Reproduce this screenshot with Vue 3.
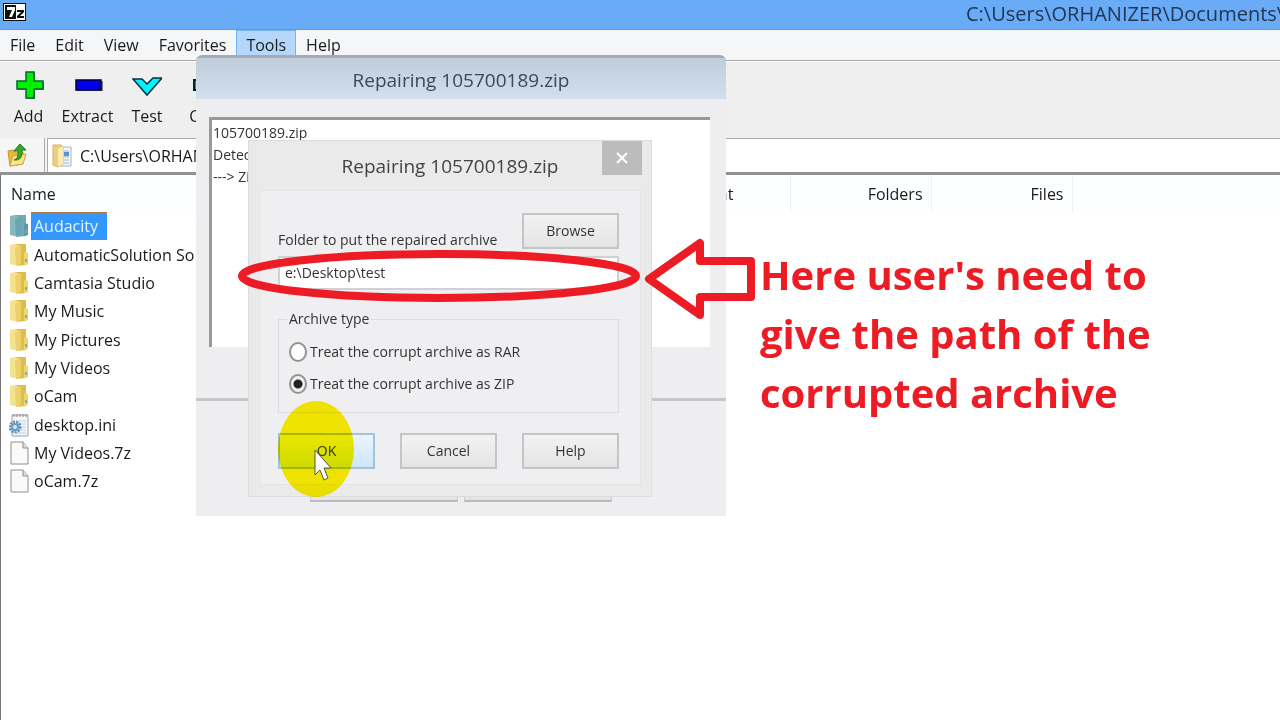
<script setup>
import { ref } from 'vue'

const menus = ['File', 'Edit', 'View', 'Favorites', 'Tools', 'Help']
const files = [
  { name: 'Audacity', kind: 'folder', selected: true },
  { name: 'AutomaticSolution So', kind: 'folder' },
  { name: 'Camtasia Studio', kind: 'folder' },
  { name: 'My Music', kind: 'folder' },
  { name: 'My Pictures', kind: 'folder' },
  { name: 'My Videos', kind: 'folder' },
  { name: 'oCam', kind: 'folder' },
  { name: 'desktop.ini', kind: 'ini' },
  { name: 'My Videos.7z', kind: 'file' },
  { name: 'oCam.7z', kind: 'file' }
]
const path = ref('C:\\Users\\ORHANIZER\\Documents\\')
const target = ref('e:\\Desktop\\test')
const archiveType = ref('zip')
</script>

<template>
  <div class="window">
    <header class="titlebar">
      <svg class="logo" viewBox="0 0 23 18" aria-hidden="true">
        <rect x="0" y="0" width="23" height="18" fill="#111" />
        <rect x="1" y="1" width="21" height="16" fill="#fff" />
        <rect x="2" y="2" width="11" height="14" fill="#111" />
        <path d="M4 4H12V7L9 14H6L9 7H4Z" fill="#fff" />
        <path d="M14 7H21V9L17 13H21V15H14V13L18 9H14Z" fill="#111" />
      </svg>
      <h1>C:\Users\ORHANIZER\Documents\</h1>
    </header>

    <nav class="menubar">
      <button v-for="m in menus" :key="m" type="button" :class="{ open: m === 'Tools' }">{{ m }}</button>
    </nav>

    <div class="toolbar">
      <button type="button" class="tool add">
        <svg viewBox="0 0 30 30" aria-hidden="true">
          <path d="M13 3H21V12H30V20H21V29H13V20H4V12H13Z" fill="#777" />
          <path d="M12 2H20V11H29V19H20V28H12V19H3V11H12Z" fill="#00f000" stroke="#063" stroke-width="1.500" />
        </svg>
        Add
      </button>
      <button type="button" class="tool extract">
        <svg viewBox="0 0 30 30" aria-hidden="true">
          <rect x="4" y="11" width="26" height="10" fill="#777" />
          <rect x="3" y="10" width="25" height="10" fill="#0000f0" stroke="#003" stroke-width="1.500" />
        </svg>
        Extract
      </button>
      <button type="button" class="tool test">
        <svg viewBox="0 0 30 30" aria-hidden="true">
          <path d="M1 9H10L15 14L21 8H30L15 25Z" fill="#00f4ff" stroke="#034" stroke-width="1.500" />
        </svg>
        Test
      </button>
      <button type="button" class="tool copy">
        <svg viewBox="0 0 30 30" aria-hidden="true">
          <path d="M1 10H17V5L28 15L17 25V20H1Z" fill="#00a890" stroke="#022" stroke-width="2" />
        </svg>
        Copy
      </button>
    </div>

    <div class="addressbar">
      <button type="button" class="up" aria-label="Up one level">
        <svg viewBox="0 0 20 24" aria-hidden="true">
          <path d="M1 8L7 7L9 10L16 9V21L3 23Z" fill="#e9b93a" stroke="#c6962a" />
          <path d="M3 23L6 13L19 11L16 21Z" fill="#fbe58c" stroke="#d3a63c" />
          <path d="M7 17Q12 16 11 8H7L13 1L19 7H15Q16 18 7 17Z" fill="#38a92c" stroke="#1e7d1b" />
        </svg>
      </button>
      <label class="address">
        <svg viewBox="0 0 20 24" aria-hidden="true">
          <path d="M7 3H19V22H8Z" fill="#f4f7fa" stroke="#a9b2b9" />
          <path d="M12 7H17M12 13H17M12 16H17M12 19H17" stroke="#9fb4c6" />
          <path d="M12 8H17V12H12Z" fill="#5793cf" />
          <path d="M1 1H9L11 3V20L6 23L1 21Z" fill="#ecd07e" stroke="#d6b35e" />
          <path d="M6 5L11 2V20L6 23Z" fill="#faebb8" />
        </svg>
        <input v-model="path" type="text" aria-label="Path" />
      </label>
    </div>

    <main class="list">
      <table>
        <colgroup>
          <col class="c-name" /><col class="c-mid" /><col class="c-mid" /><col class="c-mid" /><col />
        </colgroup>
        <thead>
          <tr>
            <th class="left">Name</th>
            <th class="left">Comment</th>
            <th>Folders</th>
            <th>Files</th>
            <th></th>
          </tr>
        </thead>
        <tbody>
          <tr v-for="f in files" :key="f.name" :class="{ selected: f.selected }">
            <td colspan="5">
              <div class="entry">
                <svg v-if="f.kind === 'folder'" viewBox="0 0 20 24" aria-hidden="true">
                  <path d="M6 1L17 1V22L7 23Z" :fill="f.selected ? '#6faab5' : '#dfbd4c'" />
                  <path d="M15 9L19 10V21L15 22Z" :fill="f.selected ? '#5a9cae' : '#eed66c'" />
                  <path d="M1 2L6 1L10 3V23L1 21Z" :fill="f.selected ? '#86b7bd' : '#f5e290'" />
                  <path d="M6 5L12 2V20L7 23Z" :fill="f.selected ? '#6ba6b0' : '#ecd06a'" />
                  <path d="M16 16H18V19H16Z" fill="#7db58b" />
                </svg>
                <svg v-else-if="f.kind === 'ini'" viewBox="0 0 20 24" aria-hidden="true">
                  <path d="M3 2H19V23H3Z" fill="#f5f7f8" stroke="#9aa0a4" />
                  <path d="M5 1V4M8 1V4M11 1V4M14 1V4M17 1V4" stroke="#888" />
                  <path d="M7 8H17M7 11H17M7 14H17M7 17H17M7 20H17" stroke="#c3cdd4" />
                  <circle cx="6" cy="14" r="5" fill="none" stroke="#5d90b8" stroke-width="3" stroke-dasharray="2 1" />
                  <circle cx="6" cy="14" r="3" fill="#dfeaf2" stroke="#6c9dc2" stroke-width="2" />
                </svg>
                <svg v-else viewBox="0 0 20 24" aria-hidden="true">
                  <path d="M2 1H14L19 7V23H2Z" fill="#fafafa" stroke="#8f8f8f" />
                  <path d="M14 1V7H19" fill="#e0e0e0" stroke="#8f8f8f" />
                </svg>
                <span>{{ f.name }}</span>
              </div>
            </td>
          </tr>
        </tbody>
      </table>
    </main>

    <section class="progress" aria-label="Repair progress">
      <h2>Repairing 105700189.zip</h2>
      <div class="log">
        <p>105700189.zip</p>
        <p>Detected</p>
        <p>---&gt; Zip</p>
      </div>
      <div class="progress-foot"><i></i><i></i></div>
    </section>

    <form class="dialog" @submit.prevent>
      <div class="dialog-title">
        <h2>Repairing 105700189.zip</h2>
        <button type="button" class="close" aria-label="Close">
          <svg viewBox="0 0 12 12" aria-hidden="true"><path d="M1 1L11 11M11 1L1 11" stroke="#fff" stroke-width="2" /></svg>
        </button>
      </div>
      <div class="panel">
        <div class="folder-row">
          <label for="folder">Folder to put the repaired archive</label>
          <button type="button" class="btn">Browse</button>
        </div>
        <input id="folder" v-model="target" class="folder" type="text" />
        <fieldset>
          <legend>Archive type</legend>
          <label><input v-model="archiveType" type="radio" value="rar" />Treat the corrupt archive as RAR</label>
          <label><input v-model="archiveType" type="radio" value="zip" />Treat the corrupt archive as ZIP</label>
        </fieldset>
        <div class="actions">
          <button type="submit" class="btn primary">OK</button>
          <button type="button" class="btn">Cancel</button>
          <button type="button" class="btn">Help</button>
        </div>
      </div>
    </form>

    <div class="spotlight"></div>
    <svg class="cursor" viewBox="0 0 18 32" aria-hidden="true">
      <path d="M1 1V26L6 21L10 31L14 29L10 19H17Z" fill="#fff" stroke="#554" stroke-width="1" />
    </svg>
    <svg class="marks" viewBox="0 0 520 90" aria-hidden="true">
      <g fill="none" stroke="#ed1c24" stroke-linejoin="round">
        <ellipse cx="204" cy="41" rx="197" ry="22" stroke-width="8" />
        <path d="M414 44L465 8V26H516V62H465V80Z" stroke-width="8" />
      </g>
    </svg>
    <p class="note">Here user's need to<br />give the path of the<br />corrupted archive</p>
  </div>
</template>

<style>
body {
  margin: 0;
  background: #fff;
}
</style>

<style scoped>
* {
  box-sizing: border-box;
}
.window {
  position: relative;
  min-height: 100vh;
  overflow: hidden;
  display: flex;
  flex-direction: column;
  background: #fff;
  color: #1a1a1a;
  font: 16px/20px "Open Sans", "Noto Sans", sans-serif;
}
h1, h2, p {
  margin: 0;
  font-weight: 400;
}
button, input {
  font: inherit;
  color: inherit;
  margin: 0;
  padding: 0;
  border: 0;
  background: none;
}
svg {
  display: block;
  flex: none;
}
.titlebar {
  display: flex;
  justify-content: space-between;
  height: 30px;
  padding: 0 0 0 3px;
  background: #6aabf7;
  border-bottom: 1px solid #5c9ae4;
}
.logo {
  width: 23px;
  height: 18px;
  margin-top: 3px;
}
.titlebar h1 {
  width: 314px;
  font-size: 20px;
  line-height: 28px;
  white-space: nowrap;
  color: #21364f;
}
.menubar {
  display: flex;
  height: 31px;
  background: #f5f6f8;
  border-bottom: 1px solid #a5a5a5;
}
.menubar button {
  padding: 0 9px 2px;
  border: 1px solid transparent;
  border-bottom: 0;
}
.menubar .open {
  background: #b5d7fb;
  border-color: #79b2ee;
}
.toolbar {
  display: flex;
  height: 77px;
  padding-top: 8px;
  background: #efefef;
  border-top: 1px solid #fff;
}
.tool {
  display: flex;
  flex-direction: column;
  align-items: center;
  height: 60px;
  gap: 6px;
}
.tool svg {
  width: 30px;
  height: 30px;
}
.add { width: 57px; }
.extract { width: 61px; }
.test { width: 58px; }
.copy { width: 64px; }
.addressbar {
  display: flex;
  height: 37px;
  background: #f5f5f6;
  border-bottom: 3px solid #929292;
}
.up {
  width: 45px;
  padding-left: 7px;
  border-right: 1px solid #aaa;
}
.up svg, .address svg {
  width: 20px;
  height: 24px;
}
.address {
  display: flex;
  flex: 1;
  align-items: center;
  gap: 8px;
  margin-left: 2px;
  padding-left: 4px;
  background: #fff;
  border: solid #aaa;
  border-width: 1px 0 0 1px;
}
.address input {
  flex: 1;
}
.list {
  flex: 1;
  border-left: 1px solid #777;
}
table {
  width: 100%;
  table-layout: fixed;
  border-collapse: collapse;
}
.c-name { width: 648px; }
.c-mid { width: 141px; }
th {
  height: 37px;
  padding: 0 8px;
  font-weight: 400;
  text-align: right;
  border-right: 1px solid #eaf0f5;
  background: #fdfeff;
}
th:last-child {
  border-right: 0;
}
th.left {
  text-align: left;
  padding-left: 10px;
}
td {
  height: 28px;
  padding: 0 0 0 8px;
}
tr:nth-child(3n + 2) td {
  height: 29px;
}
.entry {
  display: flex;
  align-items: center;
  gap: 2px;
}
.entry svg {
  width: 20px;
  height: 24px;
}
.entry span {
  padding: 3px 9px 3px 3px;
  line-height: 22px;
}
.selected span {
  color: #e8f3ff;
  background: #3397fd;
  outline: 1px dotted #b87a45;
  outline-offset: -1px;
}

.progress {
  position: absolute;
  left: 196px;
  top: 55px;
  width: 530px;
  background: #eeeef0;
  border-top: 3px solid #a6abb3;
  border-radius: 6px 6px 0 0;
  color: #333;
}
.progress h2 {
  height: 41px;
  line-height: 44px;
  text-align: center;
  font-size: 19px;
  color: #3d4856;
  background: linear-gradient(#bfcddb, #d2e0ee);
}
.log {
  height: 230px;
  margin: 18px 16px 0 13px;
  padding: 2px 0 0 1px;
  background: #fff;
  border: solid #999;
  border-width: 3px 0 0 3px;
  font-size: 14px;
  line-height: 22px;
}
.progress-foot {
  display: flex;
  justify-content: center;
  align-items: flex-end;
  gap: 6px;
  height: 118px;
  margin-top: 51px;
  padding-bottom: 14px;
  border-top: 3px solid #c6c6c8;
}
.progress-foot i {
  width: 148px;
  height: 30px;
  background: #e4e5e4;
  border: 1px solid #ccc;
  border-bottom: 2px solid #bbb;
}

.dialog {
  position: absolute;
  left: 248px;
  top: 140px;
  width: 404px;
  padding: 0 10px 11px;
  background: #eaeaea;
  border: 1px solid #dcdcdc;
  color: #333;
  font-size: 14px;
}
.dialog-title {
  display: flex;
  justify-content: center;
  height: 49px;
}
.dialog-title h2 {
  line-height: 50px;
  font-size: 19px;
  color: #444;
}
.close {
  position: absolute;
  right: 9px;
  top: 0;
  width: 40px;
  height: 34px;
  display: grid;
  place-items: center;
  background: #bcbcbc;
}
.close svg {
  width: 12px;
  height: 12px;
}
.panel {
  padding: 22px 21px 15px 18px;
  background: #efeef0;
  border: 1px solid #e4e4e5;
}
.folder-row {
  display: flex;
  justify-content: space-between;
  align-items: flex-end;
}
.folder-row label {
  white-space: nowrap;
  line-height: 18px;
}
.btn {
  width: 97px;
  height: 36px;
  background: linear-gradient(#f2f2f2, #e3e4e4);
  border: 2px solid #c4c5c6;
}
.primary {
  background: linear-gradient(#eaf4fd, #cfe6fb);
  border-color: #a3c2dc;
}
.folder {
  display: block;
  width: 100%;
  height: 34px;
  margin-top: 7px;
  padding: 0 5px 2px;
  background: #fff;
  border: 2px solid #cfd2d4;
}
fieldset {
  margin: 18px 0 20px;
  padding: 6px 8px 12px 10px;
  border: 1px solid #dcdcde;
}
legend {
  padding: 0 2px;
  margin-left: -2px;
  line-height: 22px;
}
fieldset label {
  display: flex;
  align-items: center;
  gap: 3px;
  height: 32px;
  white-space: nowrap;
}
fieldset input {
  appearance: none;
  width: 18px;
  height: 20px;
  border: 2px solid #929292;
  border-radius: 50%;
  background: #fff;
}
fieldset input:checked {
  background: radial-gradient(circle, #222 4px, #f0f0f0 5px);
}
.actions {
  display: flex;
  justify-content: space-between;
}

.spotlight {
  position: absolute;
  left: 278px;
  top: 401px;
  width: 76px;
  height: 96px;
  border-radius: 50%;
  background: #fff200;
  mix-blend-mode: multiply;
}
.cursor {
  position: absolute;
  left: 314px;
  top: 449px;
  width: 18px;
  height: 32px;
}
.marks {
  position: absolute;
  left: 235px;
  top: 235px;
  width: 520px;
  height: 90px;
}
.note {
  position: absolute;
  left: 760px;
  top: 245px;
  font-size: 40px;
  font-weight: 700;
  line-height: 59px;
  color: #ed1c24;
  white-space: nowrap;
}
</style>
